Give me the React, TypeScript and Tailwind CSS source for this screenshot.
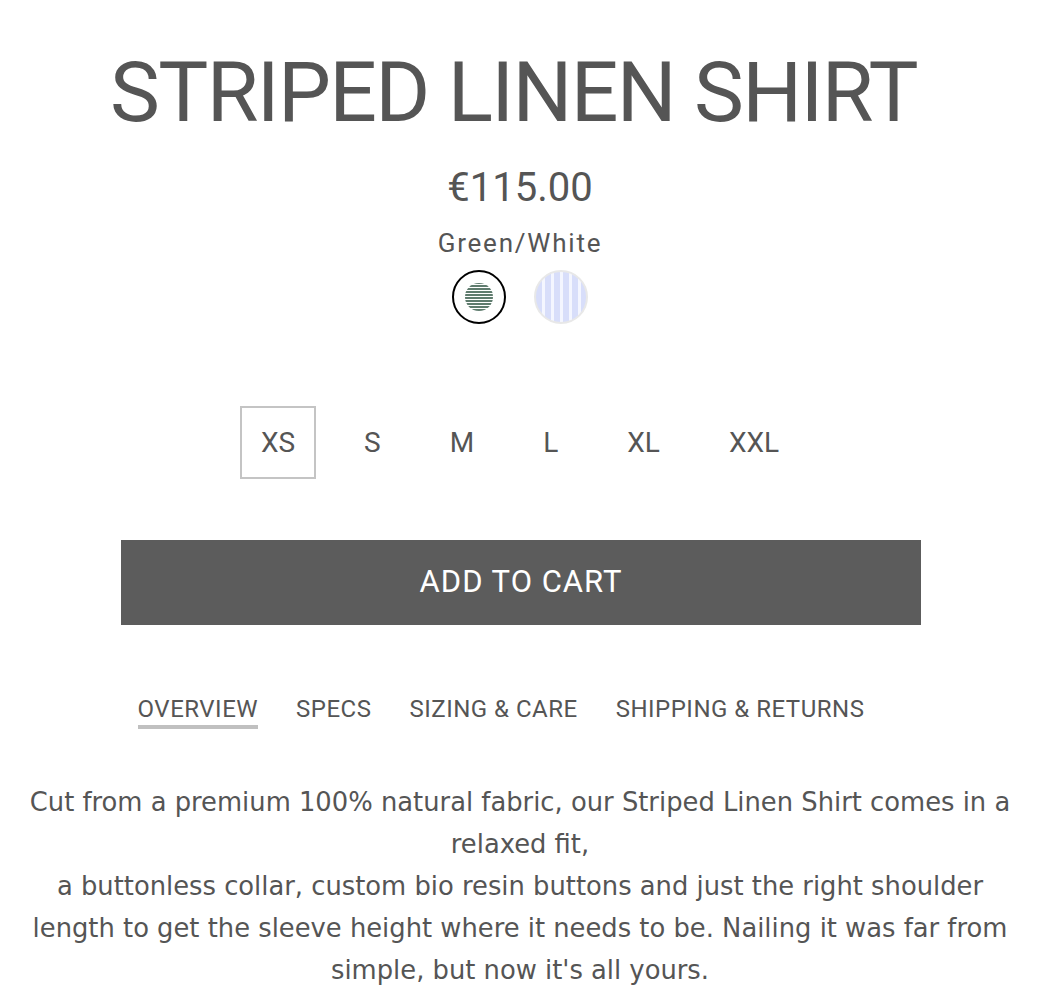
import { useState } from "react";

const SIZES = ["XS", "S", "M", "L", "XL", "XXL"];
const TABS = ["OVERVIEW", "SPECS", "SIZING & CARE", "SHIPPING & RETURNS"];

export default function App() {
  const [size, setSize] = useState("XS");
  const [tab, setTab] = useState("OVERVIEW");
  const [colour, setColour] = useState(0);

  return (
    <div className="min-h-screen w-full bg-white font-['Roboto',sans-serif] text-[#555555]">
      <div className="flex w-[1040px] flex-col items-center pt-[51px]">
        {/* title + price */}
        <h1 className="pr-[13px] text-[84px] leading-[84px] font-normal tracking-[-1.7px]">
          STRIPED LINEN SHIRT
        </h1>
        <div className="mt-[29px] text-[40px] leading-[48px]">€115.00</div>
        <div className="mt-[15px] text-[26px] leading-[32px] tracking-[1.8px]">
          {colour === 0 ? "Green/White" : "Blue/White"}
        </div>

        {/* colour swatches */}
        <div className="mt-[11px] flex gap-[28px]">
          <button
            onClick={() => setColour(0)}
            className={
              colour === 0
                ? "flex h-[54px] w-[54px] items-center justify-center rounded-full border-2 border-black bg-white"
                : "flex h-[54px] w-[54px] items-center justify-center rounded-full border-2 border-[#e6e6e6] bg-white"
            }
          >
            <span className="block h-[28px] w-[28px] rounded-full bg-[repeating-linear-gradient(0deg,#5f7c6e_0px,#5f7c6e_2px,#ffffff_2px,#ffffff_3px)]" />
          </button>
          <button
            onClick={() => setColour(1)}
            className={
              colour === 1
                ? "h-[54px] w-[54px] rounded-full border-2 border-black bg-[repeating-linear-gradient(90deg,#d8defa_0px,#d8defa_6px,#f4f6ff_6px,#f4f6ff_9px)]"
                : "h-[54px] w-[54px] rounded-full border-2 border-[#e8e8e8] bg-[repeating-linear-gradient(90deg,#d8defa_0px,#d8defa_6px,#f4f6ff_6px,#f4f6ff_9px)]"
            }
          />
        </div>

        {/* sizes */}
        <div className="mt-[82px] flex gap-[27px]">
          {SIZES.map((s) => (
            <button
              key={s}
              onClick={() => setSize(s)}
              className={
                size === s
                  ? "flex h-[73px] items-center border-2 border-[#c4c4c4] px-[19px] text-[28px]"
                  : "flex h-[73px] items-center border-2 border-transparent px-[19px] text-[28px]"
              }
            >
              {s}
            </button>
          ))}
        </div>

        {/* add to cart */}
        <button className="mt-[61px] ml-[2px] h-[85px] w-[800px] bg-[#5c5c5c] text-[31px] tracking-[1px] text-white">
          ADD TO CART
        </button>

        {/* tabs */}
        <div className="mt-[72px] flex gap-[38px] pr-[38px]">
          {TABS.map((t) => (
            <button
              key={t}
              onClick={() => setTab(t)}
              className={
                tab === t
                  ? "border-b-4 border-[#c0c0c0] pb-[4px] text-[24px] leading-[24px] tracking-[0.5px]"
                  : "border-b-4 border-transparent pb-[4px] text-[24px] leading-[24px] tracking-[0.5px]"
              }
            >
              {t}
            </button>
          ))}
        </div>

        {/* description */}
        <p className="mt-[52px] w-[1000px] text-center font-['DejaVu_Sans',sans-serif] text-[25.8px] leading-[42px]">
          Cut from a premium 100% natural fabric, our Striped Linen Shirt comes in a relaxed fit,
          <br />
          a buttonless collar, custom bio resin buttons and just the right shoulder length to get the
          sleeve height where it needs to be. Nailing it was far from simple, but now it's all yours.
        </p>
      </div>
    </div>
  );
}
